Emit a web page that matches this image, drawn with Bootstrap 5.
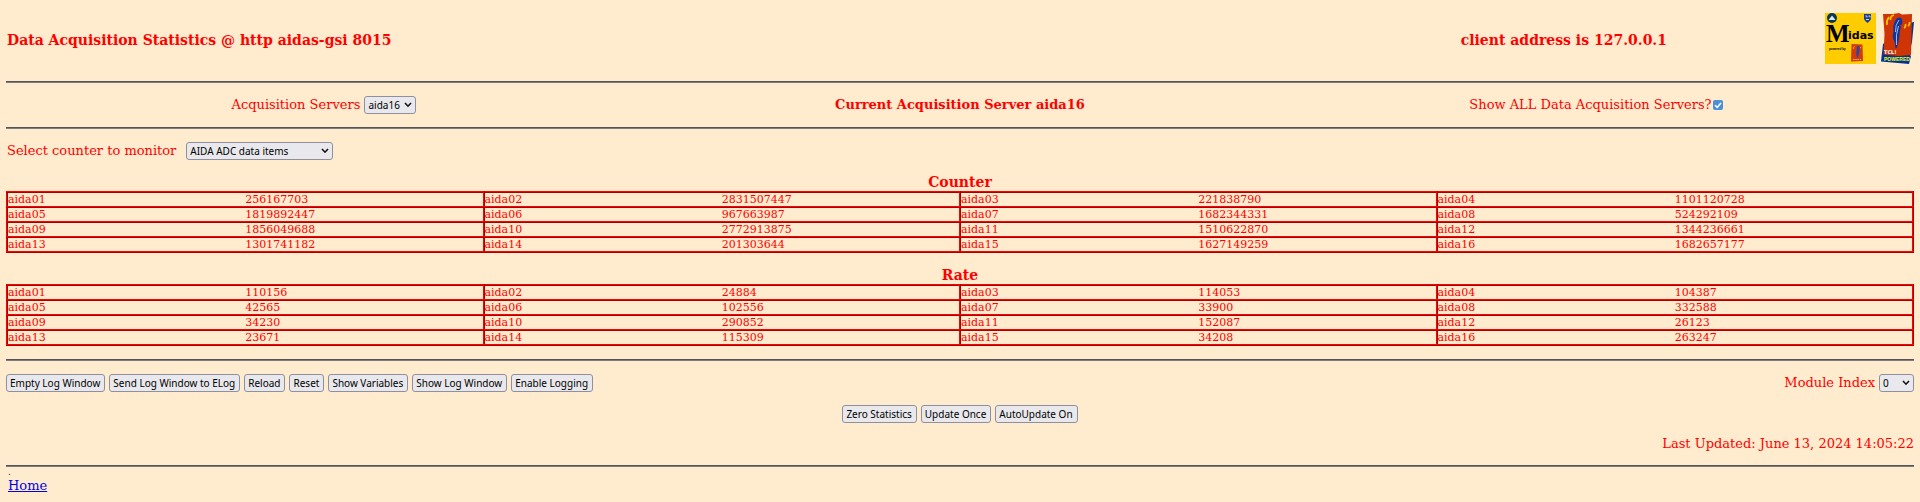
<!DOCTYPE html>
<html lang="en">
<head>
<meta charset="utf-8">
<meta name="viewport" content="width=device-width, initial-scale=1">
<title>Data Acquisition Statistics</title>
<link href="https://cdn.jsdelivr.net/npm/bootstrap@5.3.0/dist/css/bootstrap.min.css" rel="stylesheet">
<style>
body{background:#ffebcd;color:#f00;font-family:"DejaVu Serif",serif;font-size:13px;line-height:16px;padding:0 6px}
.page-head{padding:13px 0 17px 1px}
.logos{display:block;width:89px;height:51px}
.client{margin-right:158px}
h1,h2{font-size:14px;line-height:18px;font-weight:700;margin:0}
.page-head h1,.page-head h2{padding-top:2px}
hr{margin:0;border:0;height:2px;opacity:1;background:linear-gradient(#545454 50%,#7d7d80 50%)}
.server-bar{height:44px}
.gap-above{margin-top:13px}
.ui-btn,.ui-select{font-family:"Noto Sans",sans-serif;font-size:10px;line-height:14px;height:18px;color:#000;background-color:#e9e9ed;border:1px solid #8f8f9d;border-radius:3px;padding:0 4px 0 3px}
.ui-btn{white-space:nowrap}
.ui-select{appearance:none;padding:0 12px 0 3px;background-repeat:no-repeat;background-position:right 3px center;background-size:8px 6px;background-image:url("data:image/svg+xml,%3Csvg xmlns='http://www.w3.org/2000/svg' viewBox='0 0 8 6'%3E%3Cpath d='M1 1l3 3.2L7 1' fill='none' stroke='%23111' stroke-width='1.6'/%3E%3C/svg%3E")}
.server-select{width:52px}
.counter-row{gap:10px;padding-left:1px}
.counter-select{width:147px}
.module-select{width:35px}
.ui-check{appearance:none;width:10px;height:10px;margin:0 0 0 1px;border-radius:2px;vertical-align:-1px;background:#4a90d9 url("data:image/svg+xml,%3Csvg xmlns='http://www.w3.org/2000/svg' viewBox='0 0 10 10'%3E%3Cpath d='M2 5.2l2.2 2.2L8 3' fill='none' stroke='%23fff' stroke-width='1.6'/%3E%3C/svg%3E")}
.stats{width:100%;table-layout:fixed;border-collapse:collapse;font-size:11px;line-height:13px}
.stats td{padding:0;border:2px ridge #f00}
.stats td:nth-child(odd){border-right:0}
.stats td:nth-child(even){border-left:0}
.updated{padding:13px 0}
.page-foot{padding:0 2px 8px}
.dot{font-size:9px;line-height:11px;color:#333}
.home-link{color:#00e}
</style>
</head>
<body>
<header class="page-head d-flex align-items-center">
<h1>Data Acquisition Statistics @ http aidas-gsi 8015</h1>
<h2 class="client ms-auto">client address is 127.0.0.1</h2>
<svg class="logos" viewBox="0 0 89 51" role="img" aria-label="Midas, TCL powered">
<rect width="51" height="51" fill="#fc0"/>
<circle cx="7" cy="5" r="5" fill="#0c3550"/>
<path d="M3.500 7L7 2.500 10.500 7Z" fill="#dbe9ee"/>
<path d="M39 1h7v5q-1 2.500-3.500 4Q40 8.500 39 6Z" fill="#1c3f94"/>
<path d="M40.500 3h1.500v1.500M43.500 3H45v1.500M41 6.500h3" stroke="#c9d6ef" fill="none"/>
<text x="1" y="29" font-family="Liberation Serif" font-weight="700" font-size="25">M</text>
<text x="23" y="26" font-family="DejaVu Sans" font-weight="700" font-size="11">idas</text>
<text x="4" y="37" font-family="Liberation Sans" font-weight="700" font-size="3">powered by</text>
<path d="M26.500 31L37.500 31.500 38 48 26 48.500Z" fill="#d23a0a"/>
<path d="M32 33q3-1 2.500 4t-2 8q-2-3-1-7Z" fill="#2a459f"/>
<path d="M29.500 33q-1 1-1 3M35 35l1.500-1" stroke="#fc0" stroke-width=".7" fill="none"/>
<path d="M28 46.500h8" stroke="#f5b5a0" stroke-dasharray="1.500 .8" fill="none"/>
<path d="M84 10L89 9 87 29 84 41 86 43 84 51 56 48.500 58 31Z" fill="#003399"/>
<path d="M58 1L68 1 74 0 77 1.500 87 1 86.500 23 86 42 74 43 58.500 41.500 59.500 21Z" fill="#cf3405"/>
<path d="M70 8q2-4 5-3.500 3 1 2 7l-3 1q3 0 1 5l-1 9-2 8-1.500 1-1-7q-3-4-1-10-1-6 1.500-10.500Z" fill="#0b36a0"/>
<path d="M74 7q-4 5-3.500 12M73.500 13q-3 8-2 19" stroke="#b9c3df" stroke-width=".9" fill="none"/>
<path d="M69 2q-4 1-3.500 5M64 4q-3 4-2 8M79 15q2-1 1.500-4M83 13q2-1 1.500-4" stroke="#fc0" stroke-width="1.600" fill="none"/>
<text x="59" y="41" font-family="DejaVu Sans" font-weight="700" font-size="5" fill="#fff">TCL!</text>
<text x="59" y="48" font-family="Liberation Sans" font-weight="700" font-size="5" fill="#ff0">POWERED</text>
</svg>
</header>
<hr>
<div class="server-bar row g-0 align-items-center text-center">
<div class="col-4"><label for="server">Acquisition Servers</label> <select class="ui-select server-select" id="server"><option>aida16</option></select></div>
<div class="col-4 fw-bold">Current Acquisition Server aida16</div>
<div class="col-4"><label for="all">Show ALL Data Acquisition Servers?</label><input class="ui-check" type="checkbox" id="all" checked></div>
</div>
<hr>
<main>
<div class="counter-row d-flex align-items-center gap-above"><label for="counter">Select counter to monitor</label><select class="ui-select counter-select" id="counter"><option>AIDA ADC data items</option></select></div>
<h2 class="text-center gap-above">Counter</h2>
<table class="stats">
<tbody>
<tr><td>aida01</td><td>256167703</td><td>aida02</td><td>2831507447</td><td>aida03</td><td>221838790</td><td>aida04</td><td>1101120728</td></tr>
<tr><td>aida05</td><td>1819892447</td><td>aida06</td><td>967663987</td><td>aida07</td><td>1682344331</td><td>aida08</td><td>524292109</td></tr>
<tr><td>aida09</td><td>1856049688</td><td>aida10</td><td>2772913875</td><td>aida11</td><td>1510622870</td><td>aida12</td><td>1344236661</td></tr>
<tr><td>aida13</td><td>1301741182</td><td>aida14</td><td>201303644</td><td>aida15</td><td>1627149259</td><td>aida16</td><td>1682657177</td></tr>
</tbody>
</table>
<h2 class="text-center gap-above">Rate</h2>
<table class="stats">
<tbody>
<tr><td>aida01</td><td>110156</td><td>aida02</td><td>24884</td><td>aida03</td><td>114053</td><td>aida04</td><td>104387</td></tr>
<tr><td>aida05</td><td>42565</td><td>aida06</td><td>102556</td><td>aida07</td><td>33900</td><td>aida08</td><td>332588</td></tr>
<tr><td>aida09</td><td>34230</td><td>aida10</td><td>290852</td><td>aida11</td><td>152087</td><td>aida12</td><td>26123</td></tr>
<tr><td>aida13</td><td>23671</td><td>aida14</td><td>115309</td><td>aida15</td><td>34208</td><td>aida16</td><td>263247</td></tr>
</tbody>
</table>
<hr class="gap-above">
<div class="d-flex align-items-center gap-1 gap-above">
<button type="button" class="ui-btn">Empty Log Window</button>
<button type="button" class="ui-btn">Send Log Window to ELog</button>
<button type="button" class="ui-btn">Reload</button>
<button type="button" class="ui-btn">Reset</button>
<button type="button" class="ui-btn">Show Variables</button>
<button type="button" class="ui-btn">Show Log Window</button>
<button type="button" class="ui-btn">Enable Logging</button>
<label for="module" class="ms-auto">Module Index</label>
<select class="ui-select module-select" id="module"><option>0</option></select>
</div>
<div class="d-flex justify-content-center gap-1 gap-above">
<button type="button" class="ui-btn">Zero Statistics</button>
<button type="button" class="ui-btn">Update Once</button>
<button type="button" class="ui-btn">AutoUpdate On</button>
</div>
<div class="updated text-end">Last Updated: June 13, 2024 14:05:22</div>
</main>
<hr>
<footer class="page-foot">
<div class="dot">.</div>
<a class="home-link" href="#">Home</a>
</footer>
<script src="https://cdn.jsdelivr.net/npm/bootstrap@5.3.0/dist/js/bootstrap.bundle.min.js"></script>
</body>
</html>
